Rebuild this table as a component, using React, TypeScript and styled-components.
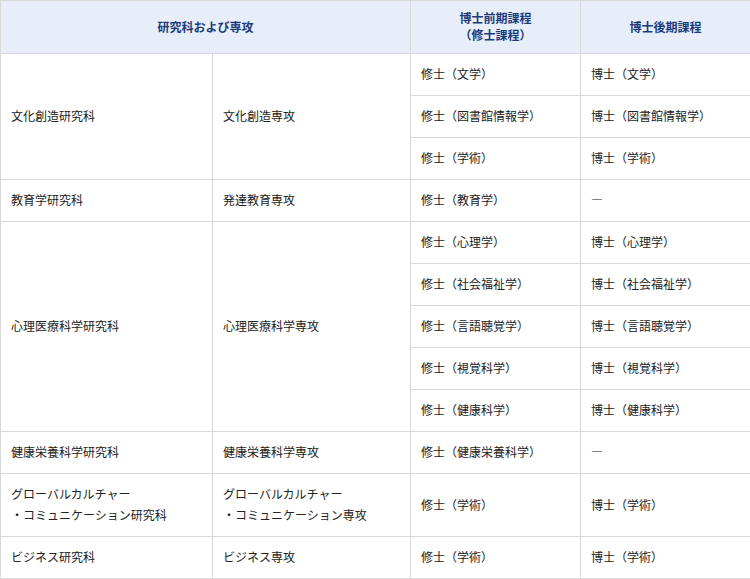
import React from "react";
import styled, { createGlobalStyle } from "styled-components";

const Global = createGlobalStyle`
  html, body { margin: 0; padding: 0; background: #ffffff; }
  body { font-family: "Noto Sans CJK JP", "Noto Sans", sans-serif; }
`;

const Table = styled.table`
  width: 750px;
  border-collapse: collapse;
  table-layout: fixed;
  font-size: 12px;
  color: #222222;
`;

const HeadCell = styled.th`
  background: #e7eef9;
  color: #1b3a7c;
  font-weight: bold;
  font-size: 12px;
  line-height: 17px;
  padding: 8px 10px 10px;
  text-align: center;
  vertical-align: middle;
  border: 1px solid #d8d8d8;
`;

const Cell = styled.td`
  padding: 9px 10px 11px;
  line-height: 21px;
  text-align: left;
  vertical-align: middle;
  border: 1px solid #d8d8d8;
  white-space: nowrap;
`;

type Sub = { master: string; doctor: string };
type Group = { school: React.ReactNode; major: React.ReactNode; subs: Sub[] };

const data: Group[] = [
  {
    school: "文化創造研究科",
    major: "文化創造専攻",
    subs: [
      { master: "修士（文学）", doctor: "博士（文学）" },
      { master: "修士（図書館情報学）", doctor: "博士（図書館情報学）" },
      { master: "修士（学術）", doctor: "博士（学術）" },
    ],
  },
  {
    school: "教育学研究科",
    major: "発達教育専攻",
    subs: [{ master: "修士（教育学）", doctor: "―" }],
  },
  {
    school: "心理医療科学研究科",
    major: "心理医療科学専攻",
    subs: [
      { master: "修士（心理学）", doctor: "博士（心理学）" },
      { master: "修士（社会福祉学）", doctor: "博士（社会福祉学）" },
      { master: "修士（言語聴覚学）", doctor: "博士（言語聴覚学）" },
      { master: "修士（視覚科学）", doctor: "博士（視覚科学）" },
      { master: "修士（健康科学）", doctor: "博士（健康科学）" },
    ],
  },
  {
    school: "健康栄養科学研究科",
    major: "健康栄養科学専攻",
    subs: [{ master: "修士（健康栄養科学）", doctor: "―" }],
  },
  {
    school: (
      <>
        グローバルカルチャー
        <br />
        ・コミュニケーション研究科
      </>
    ),
    major: (
      <>
        グローバルカルチャー
        <br />
        ・コミュニケーション専攻
      </>
    ),
    subs: [{ master: "修士（学術）", doctor: "博士（学術）" }],
  },
  {
    school: "ビジネス研究科",
    major: "ビジネス専攻",
    subs: [{ master: "修士（学術）", doctor: "博士（学術）" }],
  },
];

export default function App() {
  return (
    <>
      <Global />
      <Table>
        <colgroup>
          <col style={{ width: 212 }} />
          <col style={{ width: 198 }} />
          <col style={{ width: 170 }} />
          <col style={{ width: 170 }} />
        </colgroup>
        <thead>
          <tr>
            <HeadCell colSpan={2}>研究科および専攻</HeadCell>
            <HeadCell>
              博士前期課程
              <br />
              （修士課程）
            </HeadCell>
            <HeadCell>博士後期課程</HeadCell>
          </tr>
        </thead>
        <tbody>
          {data.map((g, gi) =>
            g.subs.map((s, si) => (
              <tr key={`${gi}-${si}`}>
                {si === 0 && <Cell rowSpan={g.subs.length}>{g.school}</Cell>}
                {si === 0 && <Cell rowSpan={g.subs.length}>{g.major}</Cell>}
                <Cell>{s.master}</Cell>
                <Cell>{s.doctor}</Cell>
              </tr>
            ))
          )}
        </tbody>
      </Table>
    </>
  );
}
